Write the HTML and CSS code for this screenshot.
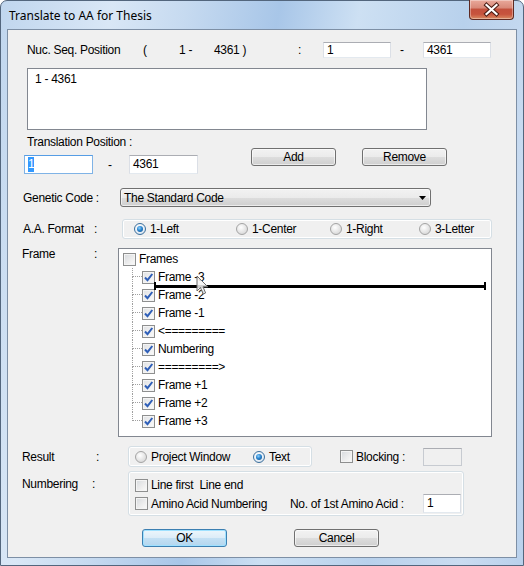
FILE: index.html
```html
<!DOCTYPE html>
<html>
<head>
<meta charset="utf-8">
<title>Translate to AA for Thesis</title>
<link rel="stylesheet" href="styles.css">
</head>
<body>
<div class="window">
  <div class="titlebar">
    <span class="title">Translate to AA for Thesis</span>
    <div class="close">
      <svg width="43" height="19" viewBox="0 0 43 19">
        <path d="M16.5 5 L26.5 14 M26.5 5 L16.5 14" stroke="#4a1c14" stroke-width="4.2" stroke-linecap="square" fill="none"/>
        <path d="M16.5 5 L26.5 14 M26.5 5 L16.5 14" stroke="#ffffff" stroke-width="2.2" stroke-linecap="square" fill="none"/>
      </svg>
    </div>
  </div>
  <div class="client">
    <div class="row nuc">
      <span class="t w-nuc">Nuc. Seq. Position</span>
      <span class="t w-paren">(</span>
      <span class="t w-from">1 -</span>
      <span class="t w-to">4361 )</span>
      <span class="t w-colon">:</span>
      <div class="edit e-nuc">1</div>
      <span class="t dash">-</span>
      <div class="edit e-nuc">4361</div>
    </div>

    <div class="listbox"><div class="item">1 - 4361</div></div>

    <div class="row trans">
      <div class="trans-left">
        <div class="t trans-label">Translation Position :</div>
        <div class="row trans-inputs">
          <div class="edit e-trans focused"><span class="sel">1</span></div>
          <span class="t dash2">-</span>
          <div class="edit e-trans">4361</div>
        </div>
      </div>
      <div class="btn add">Add</div>
      <div class="btn remove">Remove</div>
    </div>

    <div class="row genetic">
      <span class="t w-gen">Genetic Code :</span>
      <div class="combo">
        <span class="combo-text">The Standard Code</span>
        <svg class="arrow" width="7" height="4" viewBox="0 0 7 4"><path d="M0 0 H7 L3.5 4 Z" fill="#000"/></svg>
      </div>
    </div>

    <div class="row aa">
      <span class="t w-aa">A.A. Format</span>
      <span class="t w-aacolon">:</span>
      <div class="group aa-group">
        <span class="opt o-left"><span class="radio on"></span><span class="t">1-Left</span></span>
        <span class="opt o-center"><span class="radio"></span><span class="t">1-Center</span></span>
        <span class="opt o-right"><span class="radio"></span><span class="t">1-Right</span></span>
        <span class="opt"><span class="radio"></span><span class="t">3-Letter</span></span>
      </div>
    </div>

    <div class="row frame">
      <span class="t w-frame">Frame</span>
      <span class="t w-framecolon">:</span>
      <div class="tree">
        <div class="node root"><span class="cb"></span><span class="t">Frames</span></div>
        <div class="node child"><span class="elbow"><span class="up"></span><span class="down"></span></span><span class="cb on"><svg width="11" height="11" viewBox="0 0 11 11"><path d="M2 5.5 L4.5 8.2 L9.3 2" stroke="#2f5fb8" stroke-width="2" fill="none"/></svg></span><span class="t">Frame -3</span></div>
        <div class="node child"><span class="elbow"><span class="up"></span><span class="down"></span></span><span class="cb on"><svg width="11" height="11" viewBox="0 0 11 11"><path d="M2 5.5 L4.5 8.2 L9.3 2" stroke="#2f5fb8" stroke-width="2" fill="none"/></svg></span><span class="t">Frame -2</span></div>
        <div class="node child"><span class="elbow"><span class="up"></span><span class="down"></span></span><span class="cb on"><svg width="11" height="11" viewBox="0 0 11 11"><path d="M2 5.5 L4.5 8.2 L9.3 2" stroke="#2f5fb8" stroke-width="2" fill="none"/></svg></span><span class="t">Frame -1</span></div>
        <div class="node child"><span class="elbow"><span class="up"></span><span class="down"></span></span><span class="cb on"><svg width="11" height="11" viewBox="0 0 11 11"><path d="M2 5.5 L4.5 8.2 L9.3 2" stroke="#2f5fb8" stroke-width="2" fill="none"/></svg></span><span class="t">&lt;=========</span></div>
        <div class="node child"><span class="elbow"><span class="up"></span><span class="down"></span></span><span class="cb on"><svg width="11" height="11" viewBox="0 0 11 11"><path d="M2 5.5 L4.5 8.2 L9.3 2" stroke="#2f5fb8" stroke-width="2" fill="none"/></svg></span><span class="t">Numbering</span></div>
        <div class="node child"><span class="elbow"><span class="up"></span><span class="down"></span></span><span class="cb on"><svg width="11" height="11" viewBox="0 0 11 11"><path d="M2 5.5 L4.5 8.2 L9.3 2" stroke="#2f5fb8" stroke-width="2" fill="none"/></svg></span><span class="t">=========&gt;</span></div>
        <div class="node child"><span class="elbow"><span class="up"></span><span class="down"></span></span><span class="cb on"><svg width="11" height="11" viewBox="0 0 11 11"><path d="M2 5.5 L4.5 8.2 L9.3 2" stroke="#2f5fb8" stroke-width="2" fill="none"/></svg></span><span class="t">Frame +1</span></div>
        <div class="node child"><span class="elbow"><span class="up"></span><span class="down"></span></span><span class="cb on"><svg width="11" height="11" viewBox="0 0 11 11"><path d="M2 5.5 L4.5 8.2 L9.3 2" stroke="#2f5fb8" stroke-width="2" fill="none"/></svg></span><span class="t">Frame +2</span></div>
        <div class="node child last"><span class="elbow"><span class="up"></span><span class="down"></span></span><span class="cb on"><svg width="11" height="11" viewBox="0 0 11 11"><path d="M2 5.5 L4.5 8.2 L9.3 2" stroke="#2f5fb8" stroke-width="2" fill="none"/></svg></span><span class="t">Frame +3</span></div>

        <svg class="dragline" width="334" height="10" viewBox="0 0 334 10">
          <rect x="2" y="3" width="330" height="3" fill="#000"/>
          <rect x="0" y="0" width="2" height="8" fill="#000"/>
          <rect x="330" y="0" width="2" height="8" fill="#000"/>
        </svg>
        <svg class="cursor" width="14" height="21" viewBox="0 0 14 21">
          <path d="M1 1 L1 16 L4.5 12.6 L7.2 19 L9.6 18 L7 11.8 L11.8 11.8 Z" fill="#f4f4f4" fill-opacity="0.85" stroke="#6a6a6a" stroke-width="1"/>
        </svg>
      </div>
    </div>

    <div class="row result">
      <span class="t w-result">Result</span>
      <span class="t w-resultcolon">:</span>
      <div class="group result-group">
        <span class="opt o-proj"><span class="radio"></span><span class="t">Project Window</span></span>
        <span class="opt"><span class="radio on"></span><span class="t">Text</span></span>
      </div>
      <span class="opt blocking"><span class="cb"></span><span class="t">Blocking :</span></span>
      <div class="edit disabled e-block"></div>
    </div>

    <div class="row numbering">
      <span class="t w-num">Numbering</span>
      <span class="t w-numcolon">:</span>
      <div class="group num-group">
        <div class="num-row1"><span class="cb"></span><span class="t">Line first&nbsp;&nbsp;Line end</span></div>
        <div class="num-row2">
          <span class="opt o-aan"><span class="cb"></span><span class="t">Amino Acid Numbering</span></span>
          <span class="t w-first">No. of 1st Amino Acid :</span>
          <div class="edit e-first">1</div>
        </div>
      </div>
    </div>

    <div class="row bottom">
      <div class="btn ok">OK</div>
      <div class="btn cancel">Cancel</div>
    </div>
  </div>
</div>
</body>
</html>
```

FILE: styles.css
```css
* { box-sizing: border-box; }
html, body { margin: 0; padding: 0; }
body {
  width: 524px;
  height: 566px;
  overflow: hidden;
  background: #ffffff;
  font-family: "Liberation Sans", Arial, sans-serif;
  font-size: 12px;
  color: #000;
}

.window {
  width: 524px;
  height: 566px;
  border: 1px solid #53667d;
  border-radius: 7px 7px 0 0;
  background:
    linear-gradient(100deg, #c0d6ee 0%, #d9e7f6 18%, #c6daf0 30%, #a8c6e8 45%, #cde0f3 58%, #b8d1ec 75%, #cadcf1 90%, #b9d1ec 100%);
  padding: 0 6px 7px 6px;
  display: flex;
  flex-direction: column;
}

.titlebar {
  height: 28px;
  display: flex;
  align-items: flex-start;
  justify-content: space-between;
}
.title {
  font-family: "Noto Sans", "Open Sans", sans-serif;
  font-size: 12px;
  color: #000;
  padding-left: 2px;
  margin-top: 6px;
  letter-spacing: 0;
}
.close {
  width: 45px;
  height: 20px;
  margin-top: -1px;
  margin-right: 3px;
  border: 1px solid #5e2a22;
  border-top: none;
  border-radius: 0 0 4px 4px;
  background: linear-gradient(#e9a99b 0%, #d98a7a 40%, #c3503c 50%, #c7533d 75%, #d98b62 100%);
  display: flex;
  align-items: center;
  justify-content: center;
  box-shadow: inset 0 0 0 1px rgba(255,255,255,0.35);
}

.client {
  width: 510px;
  height: 529px;
  border: 1px solid #7d8fa5;
  background: #f0f0f0;
  display: flex;
  flex-direction: column;
}

.t { white-space: pre; line-height: 14px; letter-spacing: -0.3px; }
.row { display: flex; align-items: center; }

/* edit boxes */
.edit {
  height: 16px;
  background: #fff;
  border: 1px solid #dbdfe6;
  border-top-color: #abadb3;
  border-bottom-color: #e3e9ef;
  padding-left: 3px;
  line-height: 14px;
  letter-spacing: -0.3px;
}
.edit.focused { border-color: #7fb3e6; border-top-color: #569de5; }
.edit.disabled { background: #f0f0f0; border-color: #c7cbd1; border-top-color: #abadb3; }
.sel { background: #3399ff; color: #fff; display: inline-block; line-height: 15px; }

/* row 1 */
.nuc { margin-top: 12px; height: 16px; padding-left: 19px; }
.w-nuc { width: 116px; }
.w-paren { width: 36px; }
.w-from { width: 35px; }
.w-to { width: 84px; }
.w-colon { width: 25px; }
.e-nuc { width: 68px; }
.dash { width: 32px; padding-left: 9px; }

/* listbox */
.listbox {
  margin-top: 10px;
  margin-left: 19px;
  width: 400px;
  height: 62px;
  background: #fff;
  border: 1px solid #828790;
  padding: 3px 0 0 7px;
}
.item { line-height: 14px; letter-spacing: -0.3px; }

/* translation */
.trans { margin-top: 5px; align-items: flex-start; padding-left: 16px; }
.trans-left { display: flex; flex-direction: column; }
.trans-label { padding-left: 3px; height: 14px; }
.trans-inputs { margin-top: 6px; }
.e-trans { width: 69px; height: 19px; line-height: 17px; }
.dash2 { width: 36px; padding-left: 15px; }
.btn {
  width: 85px;
  height: 18px;
  border: 1px solid #707070;
  border-radius: 3px;
  background: linear-gradient(#f2f2f2 0%, #ebebeb 50%, #dddddd 51%, #cfcfcf 100%);
  box-shadow: inset 0 0 0 1px rgba(255,255,255,0.6);
  text-align: center;
  line-height: 16px;
  letter-spacing: -0.3px;
}
.add { margin-top: 13px; margin-left: 53px; }
.remove { margin-top: 13px; margin-left: 26px; }

/* genetic */
.genetic { margin-top: 14px; height: 19px; padding-left: 15px; }
.w-gen { width: 97px; }
.combo {
  width: 311px;
  height: 19px;
  border: 1px solid #707070;
  border-radius: 3px;
  background: linear-gradient(#f2f2f2 0%, #ebebeb 50%, #dddddd 51%, #cfcfcf 100%);
  box-shadow: inset 0 0 0 1px rgba(255,255,255,0.6);
  display: flex;
  align-items: center;
  justify-content: space-between;
  padding: 0 4px 0 3px;
}
.combo-text { line-height: 14px; letter-spacing: -0.3px; }

/* groups */
.group {
  border: 1px solid #d5dfe5;
  border-radius: 3px;
  box-shadow: inset 0 0 0 1px #ffffff;
}
.opt { display: flex; align-items: center; }
.radio {
  width: 12px;
  height: 12px;
  border-radius: 50%;
  border: 1px solid #a4a4a4;
  background: radial-gradient(circle at 40% 35%, #ffffff 0%, #e9e9e9 45%, #cfcfcf 100%);
  margin-right: 4px;
  flex: none;
  display: flex;
  align-items: center;
  justify-content: center;
}
.radio.on { border-color: #3c6f9c; background: radial-gradient(circle at 40% 35%, #ffffff 0%, #e6eef6 60%, #c2d3e3 100%); }
.radio.on::after {
  content: "";
  width: 6px;
  height: 6px;
  border-radius: 50%;
  background: radial-gradient(circle at 40% 35%, #8dd1ff 0%, #2a85cf 45%, #0d4a86 100%);
}

.aa { margin-top: 12px; height: 20px; padding-left: 15px; }
.w-aa { width: 71px; }
.w-aacolon { width: 28px; }
.aa-group { width: 370px; height: 20px; display: flex; align-items: center; padding-left: 11px; }
.o-left { width: 102px; }
.o-center { width: 94px; }
.o-right { width: 89px; }

/* frame tree */
.frame { margin-top: 9px; align-items: flex-start; padding-left: 14px; }
.w-frame { width: 72px; margin-top: -1px; }
.w-framecolon { width: 24px; margin-top: -1px; }
.tree {
  position: relative;
  width: 374px;
  height: 189px;
  background: #fff;
  border: 1px solid #828790;
  padding: 1px 0 0 4px;
}
.node { display: flex; align-items: center; height: 18px; }
.cb {
  width: 13px;
  height: 13px;
  border: 1px solid #8e8f8f;
  background: linear-gradient(135deg, #d6d9dd 0%, #eeeeee 60%, #fbfbfb 100%);
  box-shadow: inset 0 0 0 1px #f4f4f4;
  margin-right: 3px;
  flex: none;
  display: flex;
  align-items: center;
  justify-content: center;
}
.cb.on { background: linear-gradient(135deg, #dfe1e4 0%, #f1f1f1 60%, #fbfbfb 100%); }
.elbow { width: 10px; height: 18px; margin-left: 9px; display: flex; flex-direction: column; flex: none; }
.elbow .up { height: 9px; border-left: 1px dotted #a0a0a0; border-bottom: 1px dotted #a0a0a0; }
.elbow .down { height: 9px; border-left: 1px dotted #a0a0a0; }
.last .elbow .down { border-left: none; }

.dragline { position: absolute; left: 35px; top: 33px; }
.cursor { position: absolute; left: 77px; top: 26px; }

/* result */
.result { margin-top: 9px; height: 21px; padding-left: 14px; }
.w-result { width: 74px; }
.w-resultcolon { width: 32px; }
.result-group { width: 184px; height: 21px; display: flex; align-items: center; padding-left: 6px; }
.o-proj { width: 118px; }
.blocking { margin-left: 28px; width: 83px; }
.e-block { width: 39px; height: 18px; }

/* numbering */
.numbering { margin-top: 4px; align-items: flex-start; padding-left: 14px; }
.w-num { width: 70px; margin-top: 6px; }
.w-numcolon { width: 36px; margin-top: 6px; }
.num-group { width: 336px; height: 45px; padding: 6px 0 0 6px; display: flex; flex-direction: column; }
.num-row1 { display: flex; align-items: center; height: 14px; }
.num-row2 { display: flex; align-items: center; height: 19px; margin-top: 2px; }
.o-aan { width: 155px; }
.w-first { width: 133px; }
.e-first { width: 38px; height: 19px; line-height: 17px; }

/* bottom */
.bottom { margin-top: 13px; padding-left: 134px; }
.ok {
  border-color: #3c7fb1;
  background: linear-gradient(#ecf6fc 0%, #dcecf8 50%, #c3e0f4 51%, #b4d6ee 100%);
  box-shadow: inset 0 0 0 1px #9fe1ff;
}
.cancel { margin-left: 67px; }
```
